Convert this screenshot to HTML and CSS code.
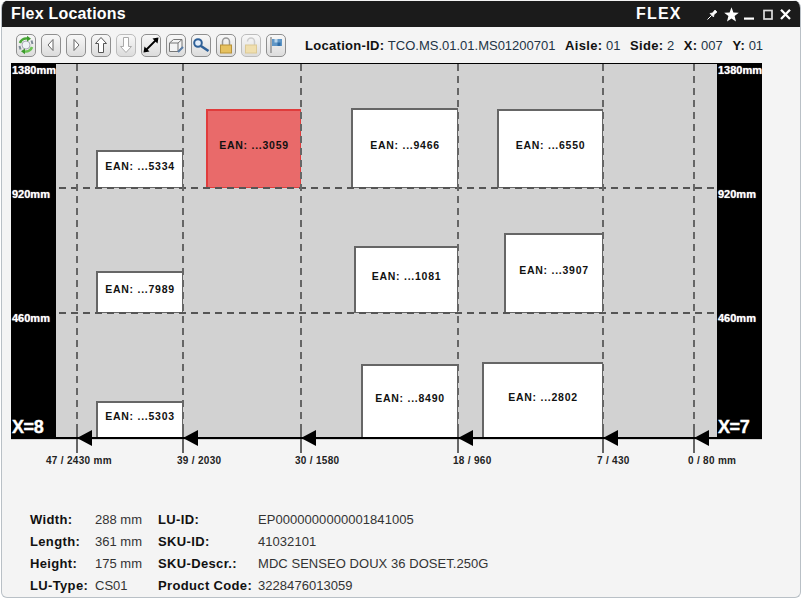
FILE: index.html
```html
<!DOCTYPE html>
<html>
	<head>
		<meta charset="UTF-8">
		<title>Flex Locations</title>
		<link rel="stylesheet" href="styles.css">
	</head>
	<body>
		<div class="win">
			<header class="titlebar">
				<span class="title">Flex Locations</span>
				<span class="flex-tag">FLEX</span>
				<div class="winbtns">
					<svg width="11" height="11" viewBox="0 0 11 11"><path d="M.5 10.500 L4.500 6.500" stroke="#fff" stroke-width="1"/><path d="M3 4.500 L6.500 8 L7 5.500 L10 3 L8 1 L5.500 4 Z" fill="#fff" stroke="#fff" stroke-width=".7"/></svg>
					<svg width="15" height="15" viewBox="0 0 15 15"><path d="M7.500 .3 L9.400 5.400 L14.800 5.700 L10.600 9 L12 14.500 L7.500 11.500 L3 14.500 L4.400 9 L.2 5.700 L5.600 5.400 Z" fill="#fff"/></svg>
					<svg class="btn-min" width="10" height="11" viewBox="0 0 10 11"><rect x="0" y="8.500" width="10" height="2.200" fill="#fff"/></svg>
					<svg class="btn-max" width="10" height="11" viewBox="0 0 10 11"><rect x="1" y="1.500" width="8" height="8.500" fill="none" stroke="#ddd" stroke-width="1.700"/></svg>
					<svg class="btn-close" width="11" height="11" viewBox="0 0 11 11"><path d="M1 .8 L10 10 M10 .8 L1 10" stroke="#fff" stroke-width="2.300"/></svg>
				</div>
			</header>

			<div class="toolbar">
				<div class="tools">
					<button class="tool">
						<svg width="18" height="20" viewBox="0 0 18 20"><circle cx="9" cy="10" r="4" fill="#eef2f6" stroke="#99a" stroke-width=".8"/><path d="M3 8 A6.500 6.500 0 0 1 10 3.500" fill="none" stroke="#4aa838" stroke-width="2.600"/><path d="M10 .8 L14 3.800 L10 6.500 Z" fill="#3c9a2c"/><path d="M15 12 A6.500 6.500 0 0 1 8 16.500" fill="none" stroke="#6cc455" stroke-width="2.600"/><path d="M8 13.500 L4 16.200 L8 19.200 Z" fill="#3c9a2c"/><path d="M15.500 9 L14.500 5.500 M2.500 11 L3.500 14.500" stroke="#7d8a96" stroke-width="2"/></svg>
					</button>
					<button class="tool">
						<svg width="12" height="16" viewBox="0 0 12 16"><path d="M8 2.500 L3 8 L8 13.500 Z" fill="#fff" stroke="#666"/></svg>
					</button>
					<button class="tool">
						<svg width="12" height="16" viewBox="0 0 12 16"><path d="M4 2.500 L9 8 L4 13.500 Z" fill="#fff" stroke="#666"/></svg>
					</button>
					<button class="tool">
						<svg width="14" height="18" viewBox="0 0 14 18"><path d="M7 1.500 L12.500 7.500 H9.500 V16.500 H4.500 V7.500 H1.500 Z" fill="#fff" stroke="#555"/></svg>
					</button>
					<button class="tool off">
						<svg width="14" height="18" viewBox="0 0 14 18"><path d="M7 16.500 L12.500 10.500 H9.500 V1.500 H4.500 V10.500 H1.500 Z" fill="#fff" stroke="#aaa"/></svg>
					</button>
					<button class="tool">
						<svg width="16" height="16" viewBox="0 0 16 16"><path d="M3 13 L13 3" stroke="#000" stroke-width="1.800"/><path d="M.5 15.500 L1.500 9.500 L6.500 14.500 Z M15.500 .5 L14.500 6.500 L9.500 1.500 Z" fill="#000"/></svg>
					</button>
					<button class="tool">
						<svg width="16" height="17" viewBox="0 0 16 17"><path d="M1.500 6 H10 V14.500 H1.500 Z M1.500 6 L5.500 2.500 H14 V10.500 L10 14.500 M10 6 L14 2.500" fill="#f4f4f4" stroke="#777"/><path d="M10 15 L15 10" stroke="#5a7da6" stroke-width="2"/></svg>
					</button>
					<button class="tool">
						<svg width="18" height="16" viewBox="0 0 18 16"><circle cx="6" cy="6" r="3.800" fill="#e4eefa" stroke="#2f6198" stroke-width="2"/><path d="M9 9 L16.500 14" stroke="#2f6198" stroke-width="2.600"/></svg>
					</button>
					<button class="tool">
						<svg width="14" height="18" viewBox="0 0 14 18"><path d="M3.500 9 V5.500 a3.500 3.500 0 0 1 7 0 V9" fill="none" stroke="#999" stroke-width="1.500"/><rect x="1.500" y="9" width="11" height="8" fill="#e6c15f" stroke="#b8923a"/></svg>
					</button>
					<button class="tool off">
						<svg width="14" height="18" viewBox="0 0 14 18"><path d="M3.500 5.500 a3.500 3.500 0 0 1 7 0 V9" fill="none" stroke="#ccc" stroke-width="1.500"/><rect x="1.500" y="9" width="11" height="8" fill="#f0dfae" stroke="#dcc995"/></svg>
					</button>
					<button class="tool">
						<svg width="14" height="18" viewBox="0 0 14 18"><path d="M2 1 V17" stroke="#888" stroke-width="1.300"/><rect x="3" y="3" width="10" height="7" fill="#5f96c6"/><rect x="5.500" y="3" width="3" height="3.500" fill="#b9d5ec"/><rect x="8.500" y="6.500" width="3" height="3.500" fill="#2f6ca6"/></svg>
					</button>
				</div>
				<div class="locinfo">
					<b>Location-ID:</b> <span>TCO.MS.01.01.MS01200701</span>
					<b>Aisle:</b> <span>01</span>
					<b>Side:</b> <span>2</span>
					<b>X:</b> <span>007</span>
					<b>Y:</b> <span>01</span>
				</div>
			</div>

			<div class="rack">
				<div class="side side-l">
					<span class="mm mm1">1380mm</span>
					<span class="mm mm2">920mm</span>
					<span class="mm mm3">460mm</span>
					<span class="xlabel">X=8</span>
				</div>
				<div class="side side-r">
					<span class="mm mm1">1380mm</span>
					<span class="mm mm2">920mm</span>
					<span class="mm mm3">460mm</span>
					<span class="xlabel">X=7</span>
				</div>

				<div class="box" style="left:85px;top:86px;width:87px;height:38px">EAN: ...5334</div>
				<div class="box sel" style="left:195px;top:45px;width:95px;height:79px">EAN: ...3059</div>
				<div class="box" style="left:340px;top:44px;width:107px;height:80px">EAN: ...9466</div>
				<div class="box" style="left:486px;top:45px;width:106px;height:79px">EAN: ...6550</div>
				<div class="box" style="left:85px;top:207px;width:87px;height:42px">EAN: ...7989</div>
				<div class="box" style="left:343px;top:182px;width:104px;height:67px">EAN: ...1081</div>
				<div class="box" style="left:493px;top:169px;width:99px;height:80px">EAN: ...3907</div>
				<div class="box" style="left:85px;top:337px;width:87px;height:37px">EAN: ...5303</div>
				<div class="box" style="left:350px;top:300px;width:97px;height:74px">EAN: ...8490</div>
				<div class="box" style="left:471px;top:298px;width:121px;height:76px">EAN: ...2802</div>

				<div class="hline" style="top:123px"></div>
				<div class="hline" style="top:248px"></div>
				<div class="vline" style="left:65px"></div>
				<div class="vline" style="left:171px"></div>
				<div class="vline" style="left:289px"></div>
				<div class="vline" style="left:446px"></div>
				<div class="vline" style="left:591px"></div>
				<div class="vline" style="left:682px"></div>

				<div class="floor"></div>
				<div class="arrow" style="left:66px"></div>
				<div class="arrow" style="left:172px"></div>
				<div class="arrow" style="left:290px"></div>
				<div class="arrow" style="left:447px"></div>
				<div class="arrow" style="left:592px"></div>
				<div class="arrow" style="left:683px"></div>

				<span class="tick" style="left:35px">47 / 2430 mm</span>
				<span class="tick" style="left:166px">39 / 2030</span>
				<span class="tick" style="left:284px">30 / 1580</span>
				<span class="tick" style="left:442px">18 / 960</span>
				<span class="tick" style="left:586px">7 / 430</span>
				<span class="tick" style="left:677px">0 / 80 mm</span>
			</div>

			<div class="details">
				<b>Width:</b><span>288 mm</span><b>LU-ID:</b><span>EP0000000000001841005</span>
				<b>Length:</b><span>361 mm</span><b>SKU-ID:</b><span>41032101</span>
				<b>Height:</b><span>175 mm</span><b>SKU-Descr.:</b><span>MDC SENSEO DOUX 36 DOSET.250G</span>
				<b>LU-Type:</b><span>CS01</span><b>Product Code:</b><span>3228476013059</span>
			</div>
		</div>
	</body>
</html>
```

FILE: styles.css
```css
*{
	margin: 0;
	padding: 0;
	box-sizing: border-box;
}
html,body{
	height: 100%;
	width: 100%;
	background: #fff;
	overflow: hidden;
}
body{
	font-family: "Liberation Sans", Arial, sans-serif;
	color: #222;
}
.win{
	width: 800px;
	height: 598px;
	margin-left: 1px;
	background: #f4f4f4;
	border: 1px solid #b9c0c6;
	border-top: 0;
	border-radius: 8px 8px 6px 6px;
	overflow: hidden;
	display: flex;
	flex-direction: column;
}

/* title bar */
.titlebar{
	height: 26px;
	margin-top: 1px;
	background: #1b1b1b;
	color: #fff;
	display: flex;
	align-items: center;
	padding-left: 9px;
	flex-shrink: 0;
}
.title{
	font-size: 16px;
	font-weight: bold;
	letter-spacing: .2px;
	width: 625px;
}
.flex-tag{
	font-size: 16px;
	font-weight: bold;
	letter-spacing: 1.200px;
	width: 69px;
}
.winbtns{
	display: flex;
	align-items: center;
	gap: 6px;
	margin-left: 2px;
}
.btn-min{
	margin-left: -1px;
}
.btn-max{
	margin-left: 3px;
}
.btn-close{
	margin-left: 1px;
}

/* toolbar */
.toolbar{
	height: 37px;
	display: flex;
	align-items: center;
	padding: 0 0 1px 14px;
	flex-shrink: 0;
}
.tools{
	display: flex;
	gap: 5px;
	width: 289px;
}
.tool{
	width: 20px;
	height: 23px;
	border: 1px solid #8f8f8f;
	border-radius: 5px;
	background: linear-gradient(#f8f8f8, #dcdcdc);
	display: flex;
	align-items: center;
	justify-content: center;
	overflow: hidden;
}
.tool.off{
	border-color: #bcbcbc;
}
.locinfo{
	font-size: 13px;
	white-space: nowrap;
	color: #234;
}
.locinfo b{
	color: #111;
	margin-left: 5px;
	letter-spacing: .3px;
}
.locinfo b:first-child{
	margin-left: 0;
}
.locinfo span{
	margin-right: 1px;
}

/* rack diagram */
.rack{
	position: relative;
	width: 751px;
	height: 424px;
	margin-left: 9px;
	flex-shrink: 0;
}
.rack::before{
	content: "";
	position: absolute;
	left: 0;
	top: -1px;
	width: 751px;
	height: 376px;
	background: #d2d2d2;
	border-top: 1px solid #000;
}
.side{
	position: absolute;
	top: -1px;
	width: 45px;
	height: 376px;
	background: #000;
	color: #fff;
	font-weight: bold;
}
.side-l{
	left: 0;
}
.side-r{
	left: 706px;
}
.mm{
	position: absolute;
	left: 1px;
	font-size: 11px;
	text-shadow: 0 0 1px #ccc;
}
.mm1{
	top: 1px;
}
.mm2{
	top: 125px;
}
.mm3{
	top: 249px;
}
.xlabel{
	position: absolute;
	left: 1px;
	bottom: 1px;
	font-size: 18px;
	letter-spacing: -.4px;
	-webkit-text-stroke: .4px #fff;
}
.box{
	position: absolute;
	background: #fff;
	border: 2px solid #666;
	border-right-width: 1px;
	border-bottom-width: 1px;
	font-size: 10.500px;
	font-weight: bold;
	color: #111;
	letter-spacing: .75px;
	white-space: nowrap;
	display: flex;
	align-items: center;
	justify-content: center;
	padding-bottom: 8px;
}
.box.sel{
	background: #e96a6a;
	border-color: #e03c3c;
}
.hline{
	position: absolute;
	left: 45px;
	width: 661px;
	height: 2px;
	background: repeating-linear-gradient(90deg, transparent 0 3px, #555 3px 10px, transparent 10px 12px);
}
.vline{
	position: absolute;
	top: 0;
	width: 2px;
	height: 389px;
	background: linear-gradient(transparent 362px, #666 362px), repeating-linear-gradient(#666 0 7px, transparent 7px 12px);
}
.floor{
	position: absolute;
	left: 45px;
	top: 373px;
	width: 661px;
	height: 2px;
	background: #000;
}
.arrow{
	position: absolute;
	top: 366px;
	width: 0;
	height: 0;
	border-top: 8px solid transparent;
	border-bottom: 8px solid transparent;
	border-right: 15px solid #000;
}
.tick{
	position: absolute;
	top: 391px;
	font-size: 10px;
	font-weight: bold;
	color: #222;
	letter-spacing: .3px;
	white-space: nowrap;
}

/* lu details */
.details{
	display: grid;
	grid-template-columns: 65px 63px 100px auto;
	grid-auto-rows: 22px;
	align-items: center;
	padding: 20px 0 0 28px;
	font-size: 13px;
	color: #333;
}
.details b{
	color: #111;
	letter-spacing: .35px;
	white-space: nowrap;
}
.details span:nth-child(4n){
	letter-spacing: .05px;
}
```
